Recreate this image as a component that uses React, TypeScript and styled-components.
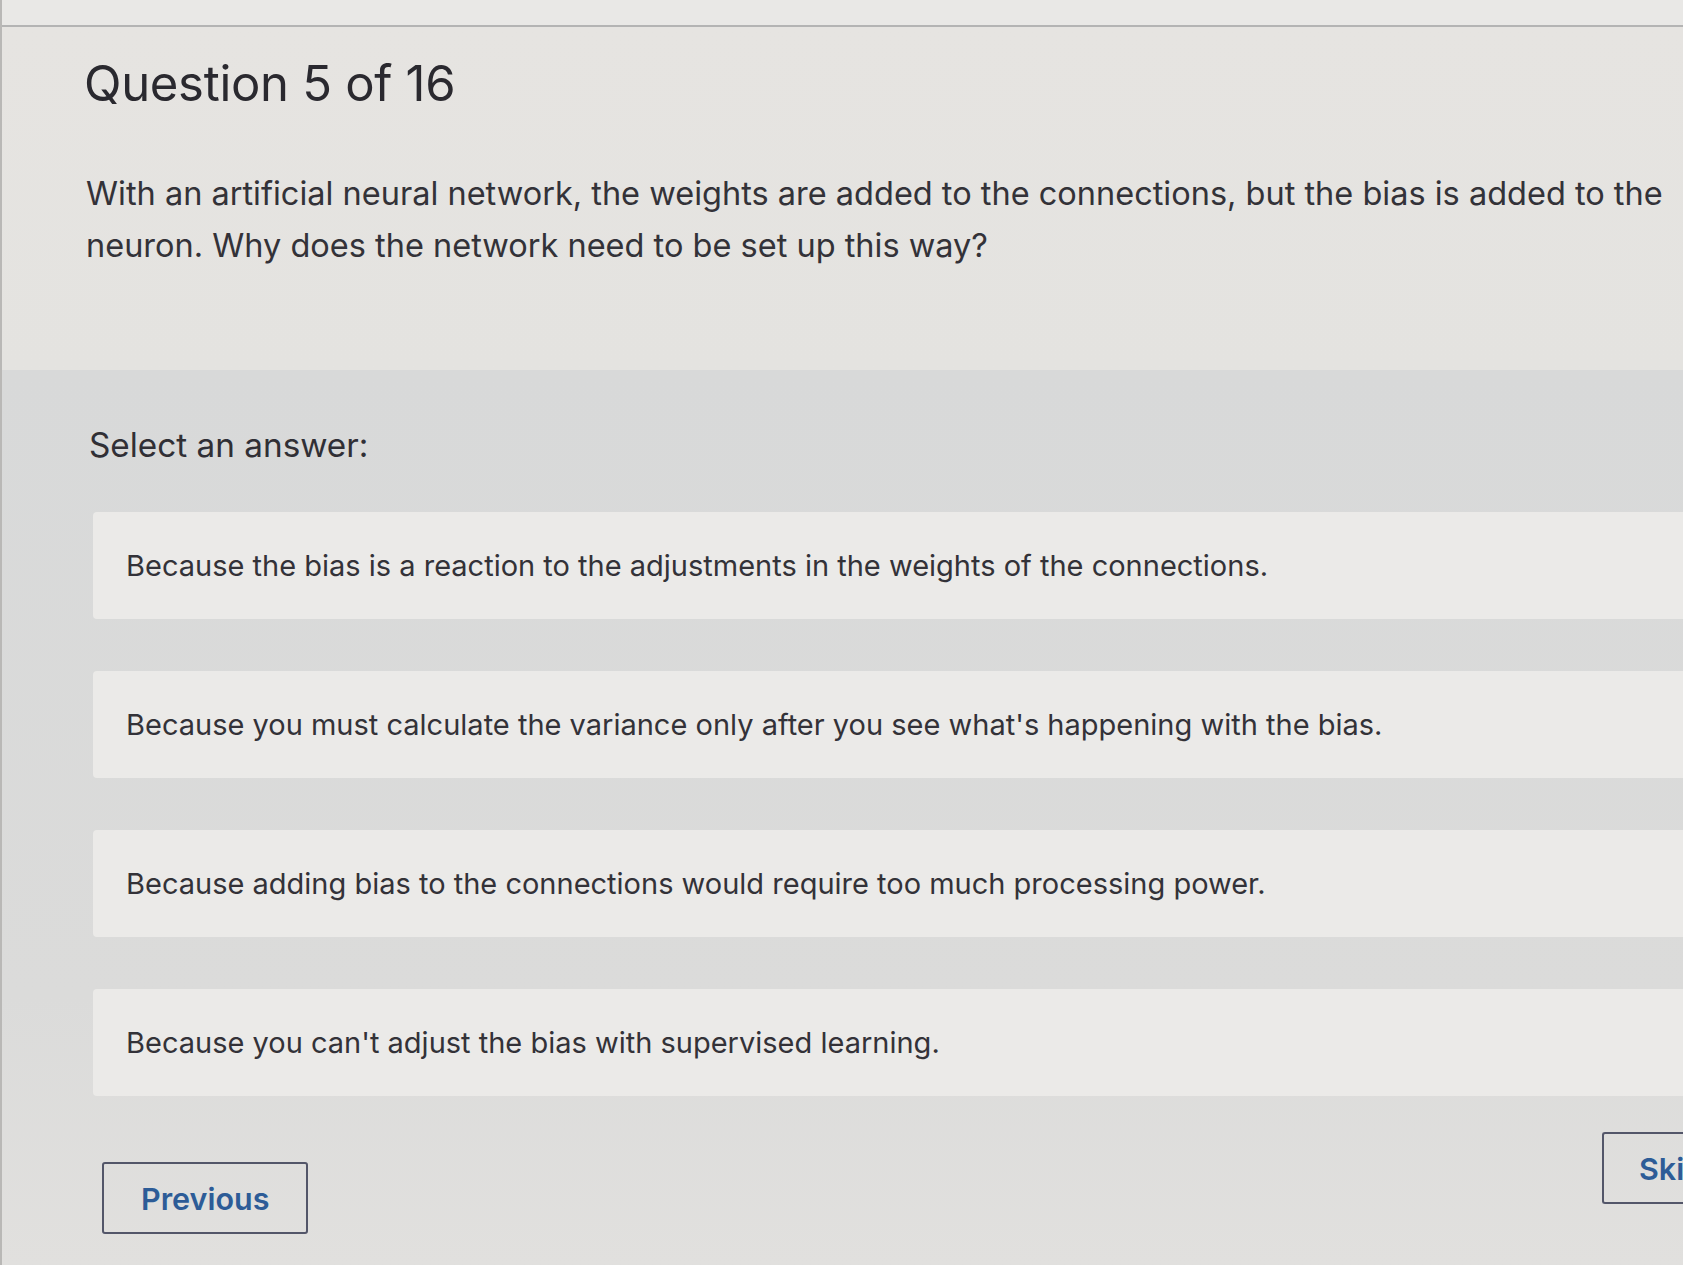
import styled, { createGlobalStyle } from 'styled-components';

const GlobalStyle = createGlobalStyle`
  html, body {
    margin: 0;
    padding: 0;
    background: #dedddb;
    overflow: hidden;
  }
  * {
    box-sizing: border-box;
  }
`;

const Page = styled.div`
  width: 1683px;
  height: 1265px;
  overflow: hidden;
  display: flex;
  flex-direction: column;
  font-family: Inter, 'Liberation Sans', sans-serif;
  color: #333238;
  border-left: 2px solid #b9b8b6;
`;

const TopStrip = styled.div`
  height: 27px;
  flex-shrink: 0;
  background: #e9e8e6;
  border-bottom: 2px solid #b4b4b4;
`;

const QuestionSection = styled.section`
  height: 343px;
  flex-shrink: 0;
  padding: 26px 8px 0 82px;
  background: linear-gradient(180deg, #e6e4e1 0%, #e4e3e0 100%);
`;

const Title = styled.h1`
  margin: 0;
  font-size: 49px;
  font-weight: 400;
  line-height: 62px;
  color: #2a292f;
  letter-spacing: -0.3px;
`;

const Prompt = styled.p`
  margin: 53px 0 0 2px;
  font-size: 32.5px;
  line-height: 52px;
  font-weight: 400;
  color: #333238;
`;

const AnswerSection = styled.section`
  flex: 1;
  padding: 50px 0 0 87px;
  background: linear-gradient(180deg, #d8d9d9 0%, #dbdbda 70%, #e1e0de 100%);
  display: flex;
  flex-direction: column;
`;

const Label = styled.h2`
  margin: 0;
  font-size: 33.3px;
  font-weight: 400;
  line-height: 50px;
  color: #302f35;
`;

const Options = styled.div`
  display: flex;
  flex-direction: column;
  gap: 52px;
  margin-top: 42px;
  margin-left: 4px;
  margin-right: -20px;
`;

const Option = styled.div`
  height: 107px;
  display: flex;
  align-items: center;
  padding: 0 0 0 33px;
  background: #ebeae8;
  border-radius: 4px;
  font-size: 29px;
  color: #333238;
`;

const Footer = styled.div`
  display: flex;
  justify-content: space-between;
  align-items: flex-start;
  margin-top: 36px;
  padding: 0 0 0 13px;
`;

const NavButton = styled.button<{ $drop?: number }>`
  height: 72px;
  margin-top: ${(p) => p.$drop ?? 0}px;
  padding: 0 37px;
  background: transparent;
  border: 2px solid #535669;
  border-radius: 3px;
  font-family: Inter, 'Liberation Sans', sans-serif;
  font-size: 30.5px;
  font-weight: 600;
  color: #2d5c97;
`;

const SkipButton = styled(NavButton)`
  width: 81px;
  padding: 0 0 0 35px;
  text-align: left;
  border-right: none;
  border-radius: 3px 0 0 3px;
  overflow: hidden;
  white-space: nowrap;
`;

const options = [
  'Because the bias is a reaction to the adjustments in the weights of the connections.',
  "Because you must calculate the variance only after you see what's happening with the bias.",
  'Because adding bias to the connections would require too much processing power.',
  "Because you can't adjust the bias with supervised learning.",
];

const App: React.FC = () => {
  return (
    <>
      <GlobalStyle />
      <Page>
        <TopStrip />
        <QuestionSection>
          <Title>Question 5 of 16</Title>
          <Prompt>
            With an artificial neural network, the weights are added to the connections, but the bias is added to the
            neuron. Why does the network need to be set up this way?
          </Prompt>
        </QuestionSection>
        <AnswerSection>
          <Label>Select an answer:</Label>
          <Options>
            {options.map((text) => (
              <Option key={text}>{text}</Option>
            ))}
          </Options>
          <Footer>
            <NavButton type='button' $drop={30}>
              Previous
            </NavButton>
            <SkipButton type='button'>Skip</SkipButton>
          </Footer>
        </AnswerSection>
      </Page>
    </>
  );
};

export default App;
